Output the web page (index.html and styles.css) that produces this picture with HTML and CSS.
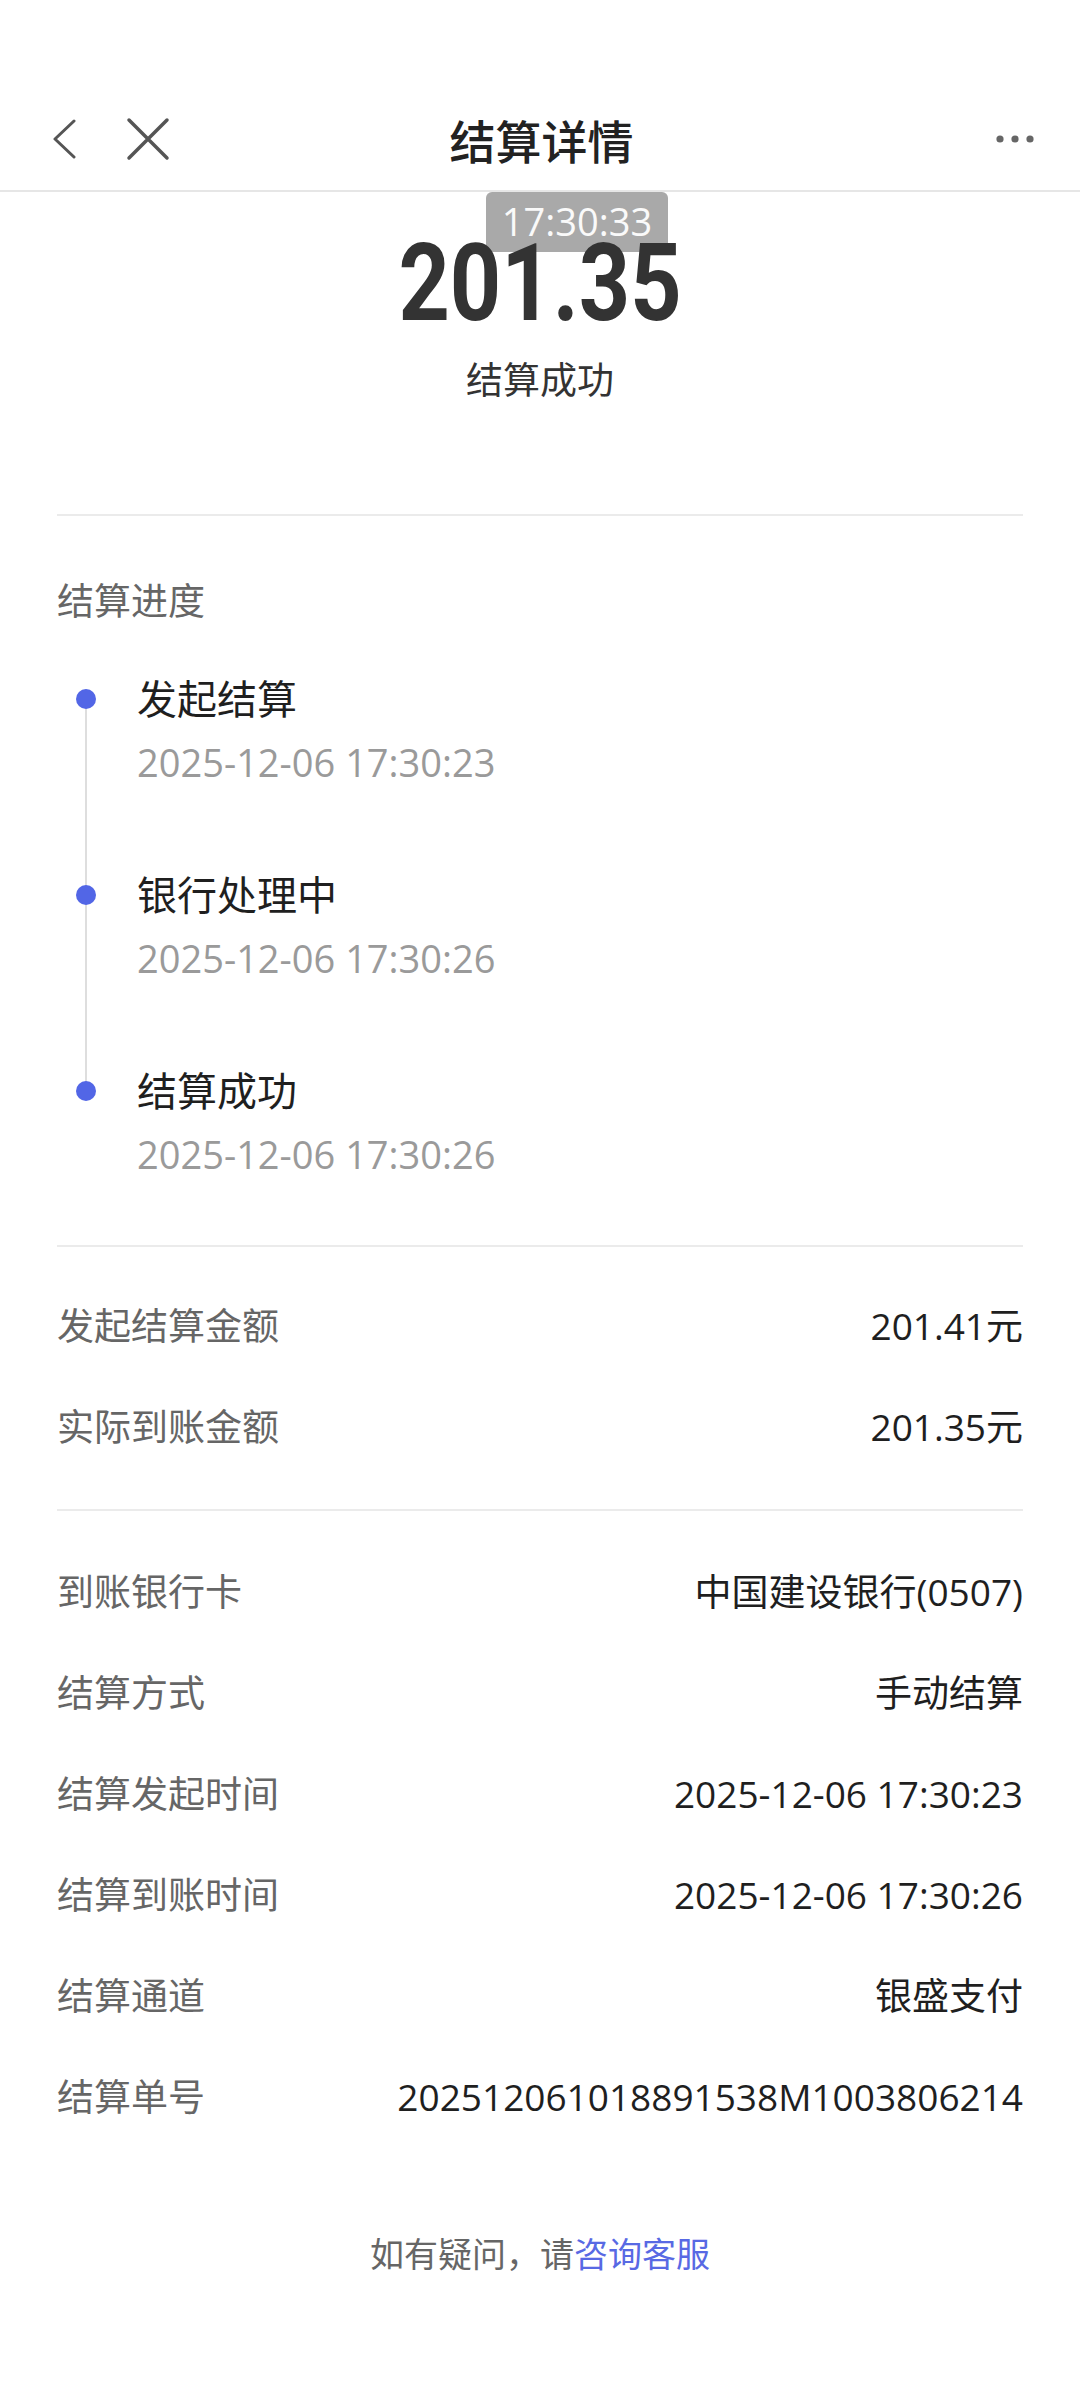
FILE: index.html
```html
<!DOCTYPE html>
<html lang="zh-CN">

<head>
    <meta charset="UTF-8">
    <meta name="viewport" content="width=device-width, initial-scale=1.0">
    <title>结算详情</title>
    <link rel="stylesheet" href="styles.css">
</head>

<body>

    <div class="status-bar"></div>

    <header class="nav">
        <div class="nav-left">
            <svg class="icon-back" width="30" height="40" viewBox="0 0 30 40">
                <path d="M26 2 L7 20 L26 38" fill="none" stroke="#555" stroke-width="3" stroke-linecap="round" stroke-linejoin="round" />
            </svg>
            <svg class="icon-close" width="44" height="44" viewBox="0 0 44 44">
                <path d="M3 3 L41 41 M41 3 L3 41" fill="none" stroke="#555" stroke-width="3.5" stroke-linecap="round" />
            </svg>
        </div>
        <h1 class="nav-title">结算详情</h1>
        <div class="nav-right">
            <svg width="40" height="10" viewBox="0 0 40 10">
                <circle cx="5" cy="5" r="3.6" fill="#666" />
                <circle cx="20" cy="5" r="3.6" fill="#666" />
                <circle cx="35" cy="5" r="3.6" fill="#666" />
            </svg>
        </div>
    </header>

    <section class="summary">
        <div class="stamp">17:30:33</div>
        <div class="amount">201.35</div>
        <div class="result">结算成功</div>
    </section>

    <main class="content">
        <!-- progress -->
        <section class="section progress">
            <h2 class="section-title">结算进度</h2>
            <ul class="steps">
                <li class="step">
                    <span class="dot"></span>
                    <div>
                        <div class="step-name">发起结算</div>
                        <div class="step-time">2025-12-06 17:30:23</div>
                    </div>
                </li>
                <li class="step">
                    <span class="dot"></span>
                    <div>
                        <div class="step-name">银行处理中</div>
                        <div class="step-time">2025-12-06 17:30:26</div>
                    </div>
                </li>
                <li class="step">
                    <span class="dot"></span>
                    <div>
                        <div class="step-name">结算成功</div>
                        <div class="step-time">2025-12-06 17:30:26</div>
                    </div>
                </li>
            </ul>
        </section>

        <!-- amounts -->
        <section class="section amounts">
            <div class="row"><span class="label">发起结算金额</span><span class="value">201.41元</span></div>
            <div class="row"><span class="label">实际到账金额</span><span class="value">201.35元</span></div>
        </section>

        <!-- details -->
        <section class="section details">
            <div class="row"><span class="label">到账银行卡</span><span class="value">中国建设银行(0507)</span></div>
            <div class="row"><span class="label">结算方式</span><span class="value">手动结算</span></div>
            <div class="row"><span class="label">结算发起时间</span><span class="value">2025-12-06 17:30:23</span></div>
            <div class="row"><span class="label">结算到账时间</span><span class="value">2025-12-06 17:30:26</span></div>
            <div class="row"><span class="label">结算通道</span><span class="value">银盛支付</span></div>
            <div class="row"><span class="label">结算单号</span><span class="value">202512061018891538M1003806214</span></div>
        </section>

        <p class="help">如有疑问，请<a class="help-link">咨询客服</a></p>
    </main>

</body>

</html>
```

FILE: styles.css
```css
body {
    margin: 0;
    background: #fff;
    font-family: "Open Sans", "Noto Sans CJK SC", sans-serif;
    color: #222;
}

.status-bar {
    height: 88px;
}

/* top bar */
.nav {
    height: 102px;
    display: grid;
    grid-template-columns: 1fr auto 1fr;
    align-items: center;
    padding: 0 45px 0 48px;
    border-bottom: 2px solid #e6e6e6;
}

.nav-left {
    display: flex;
    align-items: center;
    gap: 48px;
}

.nav-left svg {
    display: block;
}

.nav-title {
    margin: 0;
    font-size: 46px;
    font-weight: 500;
    color: #222;
}

.nav-right {
    display: flex;
    justify-content: flex-end;
}

/* amount summary */
.summary {
    position: relative;
    text-align: center;
    padding: 36px 0 109px;
}

.stamp {
    position: absolute;
    top: 0;
    left: 486px;
    width: 182px;
    height: 60px;
    line-height: 58px;
    border-radius: 6px;
    background: rgba(150, 150, 150, 0.82);
    color: #fafafa;
    font-size: 38px;
}

.amount {
    position: relative;
    font-family: Roboto, sans-serif;
    font-weight: 700;
    font-size: 108px;
    line-height: 110px;
    color: #333;
    transform: scaleX(0.83);
}

.result {
    margin-top: 17px;
    font-size: 37px;
    line-height: 50px;
    color: #333;
}

/* content */
.content {
    padding: 0 57px;
}

.section {
    border-top: 2px solid #ebebeb;
}

.progress {
    padding: 60px 0 65px;
}

.section-title {
    margin: 0;
    font-size: 37px;
    font-weight: normal;
    line-height: 50px;
    color: #666;
}

.steps {
    list-style: none;
    margin: 45px 0 0;
    padding: 0;
}

.step {
    position: relative;
    display: grid;
    grid-template-columns: 80px 1fr;
    padding-bottom: 79px;
}

.step:last-child {
    padding-bottom: 0;
}

.step:not(:last-child)::before {
    content: "";
    position: absolute;
    left: 28px;
    top: 28px;
    width: 2px;
    height: 100%;
    background: #dedede;
}

.dot {
    position: relative;
    width: 20px;
    height: 20px;
    margin: 18px 0 0 19px;
    border-radius: 50%;
    background: #5266e6;
}

.step-name {
    font-size: 40px;
    line-height: 56px;
    color: #1f1f1f;
}

.step-time {
    margin-top: 9px;
    font-size: 38px;
    line-height: 52px;
    color: #9a9a9a;
}

.amounts {
    padding: 28px 0 32px;
}

.details {
    padding-top: 30px;
}

.row {
    display: flex;
    justify-content: space-between;
    align-items: center;
    min-height: 101px;
    font-size: 37px;
    line-height: 50px;
}

.label {
    color: #666;
}

.value {
    color: #1f1f1f;
}

.help {
    margin: 83px 0 0;
    text-align: center;
    font-size: 34px;
    line-height: 48px;
    color: #666;
}

.help-link {
    color: #5869e4;
}
```
